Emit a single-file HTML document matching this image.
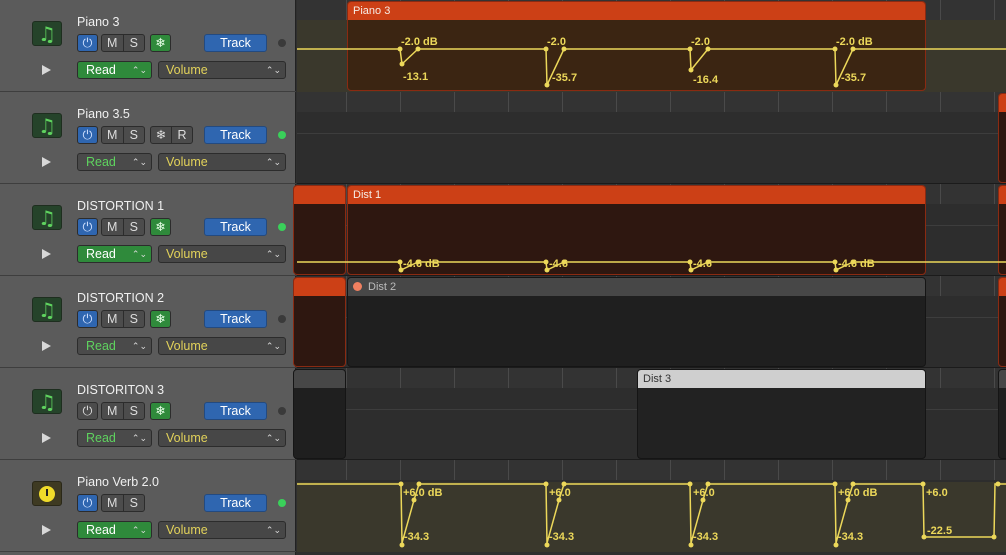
<!DOCTYPE html>
<html><head><meta charset="utf-8"><style>
*{box-sizing:border-box;margin:0;padding:0}
body{width:1006px;height:555px;overflow:hidden;background:#2f2f2f;font-family:"Liberation Sans",sans-serif;position:relative}
.a{position:absolute}
#hdr{left:0;top:0;width:296px;height:555px;background:#5b5b5b;border-right:1px solid #222}
.trk{position:absolute;left:0;width:296px;height:92px;border-bottom:1px solid #3e3e3e}
.ic{position:absolute;left:32px;top:21px;width:30px;height:25px;background:#25432a;border:1px solid #1e2e1f;border-radius:3px;color:#5fd35f;font-family:"DejaVu Sans",sans-serif;font-size:20px;text-align:center;line-height:24px}
.nm{position:absolute;left:77px;top:15px;color:#f0f0f0;font-size:12.5px}
.b{position:absolute;top:34px;height:18px;border:1px solid #2c2c2c;border-radius:3px;background:#4c4c4c;color:#ddd;font-size:12.5px;text-align:center;line-height:16px}
.pw{left:77px;width:21px}
.pw.on{background:#2f66b0;color:#cfe0ff}
.ms{left:101px;width:44px;display:flex}
.ms span{flex:1;border-right:1px solid #2c2c2c}.ms span:last-child{border:0}
.fz{left:150px;width:21px;background:#2f8a3b;color:#e8ffe8}
.fr{left:150px;width:43px;display:flex}.fr span{flex:1;border-right:1px solid #2c2c2c}.fr span:last-child{border:0}
.tk{left:204px;width:63px;background:#2f66b0;color:#fff;border-color:#234a80}
.dot{position:absolute;left:278px;top:39px;width:8px;height:8px;border-radius:50%;background:#3a3a3a}
.dot.g{background:#3ad05a}
.pl{position:absolute;left:42px;top:65px;width:0;height:0;border-left:9px solid #d8d8d8;border-top:5.5px solid transparent;border-bottom:5.5px solid transparent}
.rd{position:absolute;left:77px;top:61px;width:75px;height:18px;border:1px solid #2c2c2c;border-radius:3px;background:#4a4a4a;color:#5fd35f;font-size:12.5px;padding-left:8px;line-height:16px}
.rd.on{background:#2f8a3b;color:#fff}
.vo{position:absolute;left:158px;top:61px;width:128px;height:18px;border:1px solid #2c2c2c;border-radius:3px;background:#474747;color:#e2d25a;font-size:12.5px;padding-left:7px;line-height:16px}
.ar{position:absolute;right:4px;top:0;font-size:9px;color:#ddd}
.lane{position:absolute;left:297px;width:709px;height:92px;background:#2d2d2d;border-bottom:1px solid #1b1b1b}
.rul{position:absolute;left:0;top:0;width:709px;height:20px;background:#333;background-image:repeating-linear-gradient(90deg,transparent 0,transparent 49px,#4a4a4a 49px,#4a4a4a 50px,transparent 50px,transparent 54px);}
.mid{position:absolute;left:0;top:41px;width:709px;height:1px;background:#3d3d3d}
.rg{position:absolute;border:1px solid #151515;border-radius:4px;overflow:hidden}
.rh{height:18px;font-size:11px;line-height:18px;padding-left:5px}
.red .rh{background:#cc4016;color:#f6ece6}
.red{background:#2e1710;border-color:#8a2a12}
.gr .rh{background:#474747;color:#bbb}
.gr{background:#1f1f1f}
.lt .rh{background:#cfcfcf;color:#333}
.lt{background:#222}
svg text{font-family:"Liberation Sans",sans-serif;font-size:11px;font-weight:bold;fill:#ecd85a}
</style></head><body>
<div id="hdr" class="a">
 <div class="trk" style="top:0"><div class="ic">♫</div><div class="nm">Piano 3</div>
  <div class="b pw on">⏻</div><div class="b ms"><span>M</span><span>S</span></div><div class="b fz">❄</div>
  <div class="b tk">Track</div><div class="dot"></div><div class="pl"></div>
  <div class="rd on">Read<span class="ar">⌃⌄</span></div><div class="vo">Volume<span class="ar">⌃⌄</span></div></div>
 <div class="trk" style="top:92px"><div class="ic">♫</div><div class="nm">Piano 3.5</div>
  <div class="b pw on">⏻</div><div class="b ms"><span>M</span><span>S</span></div><div class="b fr"><span>❄</span><span>R</span></div>
  <div class="b tk">Track</div><div class="dot g"></div><div class="pl"></div>
  <div class="rd">Read<span class="ar">⌃⌄</span></div><div class="vo">Volume<span class="ar">⌃⌄</span></div></div>
 <div class="trk" style="top:184px"><div class="ic">♫</div><div class="nm">DISTORTION 1</div>
  <div class="b pw on">⏻</div><div class="b ms"><span>M</span><span>S</span></div><div class="b fz">❄</div>
  <div class="b tk">Track</div><div class="dot g"></div><div class="pl"></div>
  <div class="rd on">Read<span class="ar">⌃⌄</span></div><div class="vo">Volume<span class="ar">⌃⌄</span></div></div>
 <div class="trk" style="top:276px"><div class="ic">♫</div><div class="nm">DISTORTION 2</div>
  <div class="b pw on">⏻</div><div class="b ms"><span>M</span><span>S</span></div><div class="b fz">❄</div>
  <div class="b tk">Track</div><div class="dot"></div><div class="pl"></div>
  <div class="rd">Read<span class="ar">⌃⌄</span></div><div class="vo">Volume<span class="ar">⌃⌄</span></div></div>
 <div class="trk" style="top:368px"><div class="ic">♫</div><div class="nm">DISTORITON 3</div>
  <div class="b pw">⏻</div><div class="b ms"><span>M</span><span>S</span></div><div class="b fz">❄</div>
  <div class="b tk">Track</div><div class="dot"></div><div class="pl"></div>
  <div class="rd">Read<span class="ar">⌃⌄</span></div><div class="vo">Volume<span class="ar">⌃⌄</span></div></div>
 <div class="trk" style="top:460px"><div class="ic" style="background:#3e3a22;border-color:#2a2818"><span style="display:inline-block;width:16px;height:16px;border-radius:50%;background:#f0dc2a;margin-top:4px;position:relative"><span style="position:absolute;left:7px;top:3px;width:2px;height:7px;background:#222"></span></span></div><div class="nm">Piano Verb 2.0</div>
  <div class="b pw on">⏻</div><div class="b ms"><span>M</span><span>S</span></div>
  <div class="b tk">Track</div><div class="dot g"></div><div class="pl"></div>
  <div class="rd on">Read<span class="ar">⌃⌄</span></div><div class="vo">Volume<span class="ar">⌃⌄</span></div></div>
</div>

<div class="lane" style="top:0"><div class="rul"></div><div class="a" style="left:0;top:20px;width:709px;height:72px;background:#3a382c"></div>
 <div class="rg red" style="left:50px;top:1px;width:579px;height:90px;background:#3b2512"><div class="rh">Piano 3</div></div></div>
<div class="lane" style="top:92px"><div class="rul"></div><div class="mid"></div>
 <div class="rg red" style="left:701px;top:1px;width:12px;height:90px"><div class="rh"></div></div></div>
<div class="lane" style="top:184px"><div class="rul"></div><div class="mid"></div>
 <div class="rg red" style="left:-4px;top:1px;width:53px;height:90px"><div class="rh"></div></div>
 <div class="rg red" style="left:50px;top:1px;width:579px;height:90px"><div class="rh">Dist 1</div></div>
 <div class="rg red" style="left:701px;top:1px;width:12px;height:90px"><div class="rh"></div></div></div>
<div class="lane" style="top:276px"><div class="rul"></div><div class="mid"></div>
 <div class="rg red" style="left:-4px;top:1px;width:53px;height:90px"><div class="rh"></div></div>
 <div class="rg gr" style="left:50px;top:1px;width:579px;height:90px"><div class="rh"><span style="display:inline-block;width:9px;height:9px;border-radius:50%;background:#f08060;margin-right:6px;vertical-align:-1px"></span>Dist 2</div></div>
 <div class="rg red" style="left:701px;top:1px;width:12px;height:90px"><div class="rh"></div></div></div>
<div class="lane" style="top:368px"><div class="rul"></div><div class="mid"></div>
 <div class="rg gr" style="left:-4px;top:1px;width:53px;height:90px"><div class="rh"></div></div>
 <div class="rg lt" style="left:340px;top:1px;width:289px;height:90px"><div class="rh">Dist 3</div></div>
 <div class="rg gr" style="left:701px;top:1px;width:12px;height:90px"><div class="rh"></div></div></div>
<div class="lane" style="top:460px"><div class="rul"></div><div class="a" style="left:0;top:22px;width:709px;height:70px;background:#3a382c"></div></div>

<svg class="a" style="left:0;top:0" width="1006" height="555">
<g stroke="#ecd85a" stroke-width="1.5" fill="none">
<polyline points="297,49 400,49 402,64 418,49 546,49 547,85 564,49 690,49 691,70 708,49 835,49 836,85 853,49 1006,49"/>
<polyline points="297,262 400,262 401,270 418,262 546,262 547,270 564,262 690,262 691,270 708,262 835,262 836,270 853,262 1006,262"/>
<polyline points="297,484 401,484 402,543 414,500 419,484 546,484 547,543 559,500 564,484 690,484 691,543 703,500 708,484 835,484 836,543 848,500 853,484 923,484 924,537 994,537 995,484 1006,484"/>
</g>
<g fill="#ecd85a">
<circle cx="400" cy="49" r="2.5"/><circle cx="402" cy="64" r="2.5"/><circle cx="418" cy="49" r="2.5"/>
<circle cx="546" cy="49" r="2.5"/><circle cx="547" cy="85" r="2.5"/><circle cx="564" cy="49" r="2.5"/>
<circle cx="690" cy="49" r="2.5"/><circle cx="691" cy="70" r="2.5"/><circle cx="708" cy="49" r="2.5"/>
<circle cx="835" cy="49" r="2.5"/><circle cx="836" cy="85" r="2.5"/><circle cx="853" cy="49" r="2.5"/>
<circle cx="400" cy="262" r="2.5"/><circle cx="401" cy="270" r="2.5"/><circle cx="418" cy="262" r="2.5"/>
<circle cx="546" cy="262" r="2.5"/><circle cx="547" cy="270" r="2.5"/><circle cx="564" cy="262" r="2.5"/>
<circle cx="690" cy="262" r="2.5"/><circle cx="691" cy="270" r="2.5"/><circle cx="708" cy="262" r="2.5"/>
<circle cx="835" cy="262" r="2.5"/><circle cx="836" cy="270" r="2.5"/><circle cx="853" cy="262" r="2.5"/>
<circle cx="401" cy="484" r="2.5"/><circle cx="402" cy="545" r="2.5"/><circle cx="414" cy="500" r="2.5"/><circle cx="419" cy="484" r="2.5"/>
<circle cx="546" cy="484" r="2.5"/><circle cx="547" cy="545" r="2.5"/><circle cx="559" cy="500" r="2.5"/><circle cx="564" cy="484" r="2.5"/>
<circle cx="690" cy="484" r="2.5"/><circle cx="691" cy="545" r="2.5"/><circle cx="703" cy="500" r="2.5"/><circle cx="708" cy="484" r="2.5"/>
<circle cx="835" cy="484" r="2.5"/><circle cx="836" cy="545" r="2.5"/><circle cx="848" cy="500" r="2.5"/><circle cx="853" cy="484" r="2.5"/>
<circle cx="923" cy="484" r="2.5"/><circle cx="924" cy="537" r="2.5"/><circle cx="994" cy="537" r="2.5"/><circle cx="998" cy="484" r="2.5"/>
</g>
<text x="401" y="45">-2.0 dB</text><text x="403" y="80">-13.1</text>
<text x="547" y="45">-2.0</text><text x="552" y="81">-35.7</text>
<text x="691" y="45">-2.0</text><text x="693" y="83">-16.4</text>
<text x="836" y="45">-2.0 dB</text><text x="841" y="81">-35.7</text>
<text x="403" y="267">-4.6 dB</text><text x="549" y="267">-4.6</text><text x="693" y="267">-4.6</text><text x="838" y="267">-4.6 dB</text>
<text x="403" y="496">+6.0 dB</text><text x="404" y="540">-34.3</text>
<text x="549" y="496">+6.0</text><text x="549" y="540">-34.3</text>
<text x="693" y="496">+6.0</text><text x="693" y="540">-34.3</text>
<text x="838" y="496">+6.0 dB</text><text x="838" y="540">-34.3</text>
<text x="926" y="496">+6.0</text><text x="927" y="534">-22.5</text>
</svg>
</body></html>
